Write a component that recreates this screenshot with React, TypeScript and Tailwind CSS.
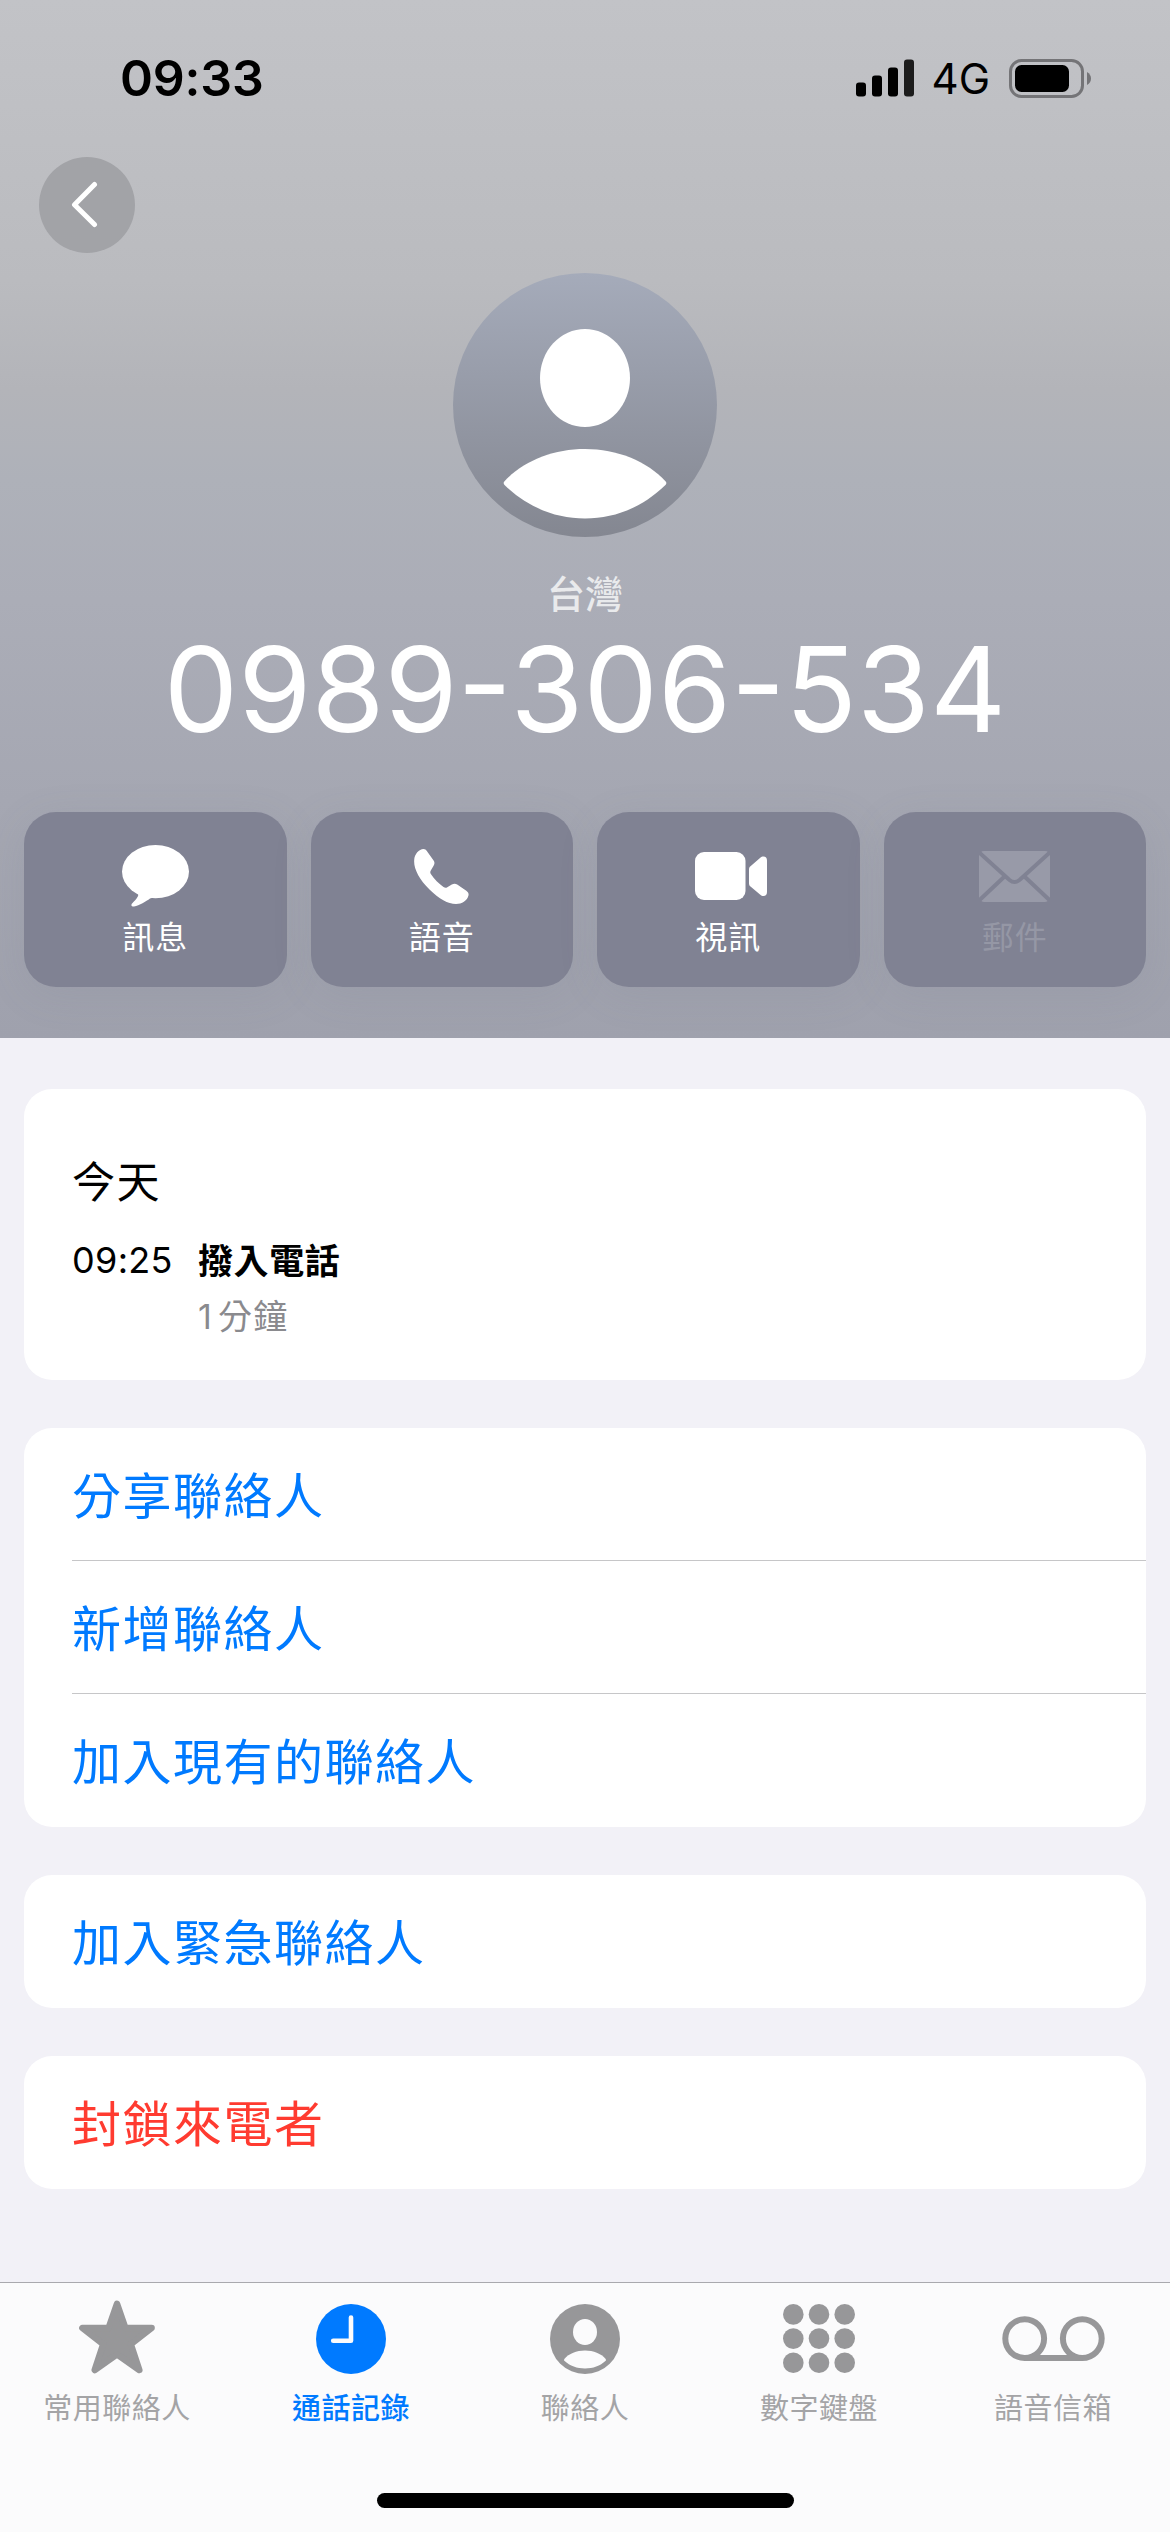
import type { ReactNode } from 'react';

const MessageIcon = () => (
  <svg width="67" height="62" viewBox="0 0 67 62" fill="#fff">
    <ellipse cx="33.5" cy="26.6" rx="33.5" ry="26.6" />
    <path d="M12 46 C16 48.5 17 49 15.8 51.5 C14.6 54 12.5 56 10.3 58.2 C8.6 60 9.5 61.7 12 61.4 C17.5 60.7 24 56.5 28 53.6 C29 53 30 53 33 53 L30 40 Z" />
  </svg>
);

const PhoneIcon = () => (
  <svg width="55" height="55" viewBox="0 0 55 55" fill="#fff">
    <path d="M0.2 11 C0.5 5 5 0 9.5 0 C11 0 12 0.7 13 2.3 L19.6 11.4 C20.8 13.2 20.7 14.8 19.6 16.8 L16.8 21.4 C16 22.8 16.1 23.8 17 25.3 C20 30 25 35 29.5 38 C31 39 32 39 33.3 38.2 L37.8 35.6 C39.8 34.4 41.6 34.5 43.2 35.6 L52.3 41.7 C54.5 43.3 55 45 54.3 47 C53 51.5 48 55 42 55 C34 55 25 50 15.5 40.5 C5 30 -0.5 19.5 0.2 11 Z" />
  </svg>
);

const VideoIcon = () => (
  <svg width="72" height="48" viewBox="0 0 72 48" fill="#fff" className="ml-[5px]">
    <rect width="50.5" height="48" rx="9" />
    <path d="M54 17.5 C54 15.8 54.5 15 55.5 14.2 L65 6 C66.3 5 67.2 4.6 68.5 4.6 C70.7 4.6 72 6 72 8.5 V40 C72 42.5 70.7 44 68.5 44 C67.2 44 66.3 43.5 65 42.4 L55.5 34.5 C54.5 33.6 54 32.8 54 31.2 Z" />
  </svg>
);

const MailIcon = () => (
  <svg width="71" height="51" viewBox="0 0 71 51">
    <rect width="71" height="51" rx="5" fill="#989aa8" />
    <g fill="none" stroke="#808293" strokeWidth="4">
      <path d="M-2 -0.5 L30.5 29 Q35.5 33 40.5 29 L73 -0.5" />
      <path d="M-2 51.5 L25 26 M73 51.5 L46 26" />
    </g>
  </svg>
);

const StarIcon = () => (
  <svg width="76" height="74" viewBox="0 0 76 74" className="mb-[4px]">
    <path
      d="M38 3.8 L46.4 28 H72.6 L51.8 44.3 L60.3 70 L38 54.3 L15.7 70 L24.2 44.3 L3.4 28 H29.6 Z"
      fill="#979799"
      stroke="#979799"
      strokeWidth="6.5"
      strokeLinejoin="round"
    />
  </svg>
);

const ClockIcon = () => (
  <svg width="70" height="70" viewBox="0 0 70 70">
    <circle cx="35" cy="35" r="35" fill="#007aff" />
    <path d="M35 13.5 V36.7 H17.2" fill="none" stroke="#fbfbfc" strokeWidth="4.6" strokeLinecap="round" strokeLinejoin="round" />
  </svg>
);

const PersonIcon = () => (
  <svg width="70" height="70" viewBox="0 0 70 70">
    <circle cx="35" cy="35" r="35" fill="#979799" />
    <ellipse cx="35" cy="28" rx="12" ry="13" fill="#fbfbfc" />
    <path d="M14.3 55 C19 49.5 26.5 46.5 35 46.5 S51 49.5 55.7 55 Q56.2 56 55.7 56.8 C50 62 43 64.5 35 64.5 S20 62 14.3 56.8 Q13.8 56 14.3 55 Z" fill="#fbfbfc" />
  </svg>
);

const KeypadIcon = () => (
  <svg width="72" height="70" viewBox="0 0 72 70" fill="#979799">
    {[10.4, 34.6, 58.8].map((y) =>
      [10.3, 36, 61.7].map((x) => <circle key={`${x}-${y}`} cx={x} cy={y} r="10.3" />)
    )}
  </svg>
);

const VoicemailIcon = () => (
  <svg width="103" height="46" viewBox="0 0 103 46" fill="none" stroke="#979799" strokeWidth="6">
    <circle cx="22.7" cy="22.6" r="19.4" />
    <circle cx="80.3" cy="22.6" r="19.4" />
    <path d="M22.7 42 H80.3" />
  </svg>
);

const actions = [
  { label: '訊息', icon: <MessageIcon /> },
  { label: '語音', icon: <PhoneIcon /> },
  { label: '視訊', icon: <VideoIcon /> },
  { label: '郵件', icon: <MailIcon />, disabled: true },
];

const tabs = [
  { label: '常用聯絡人', icon: <StarIcon /> },
  { label: '通話記錄', icon: <ClockIcon />, active: true },
  { label: '聯絡人', icon: <PersonIcon /> },
  { label: '數字鍵盤', icon: <KeypadIcon /> },
  { label: '語音信箱', icon: <VoicemailIcon /> },
];

function StatusBar() {
  return (
    <div className="h-[157px] flex items-start justify-between pl-[120px] pr-[78px] pt-[48px] text-black font-['Inter',sans-serif]">
      <span className="text-[50px] leading-[60px] tracking-[-0.2px] font-semibold">09:33</span>
      <div className="h-[60px] flex items-center">
        <svg width="58" height="38" viewBox="0 0 58 38" className="mr-[18px]">
          <rect x="0" y="23.5" width="10" height="14" rx="3" />
          <rect x="16" y="16.5" width="10" height="21" rx="3" />
          <rect x="32" y="8.5" width="10" height="29" rx="3" />
          <rect x="48" y="0.5" width="10" height="37" rx="3" fill="#1c1c1c" />
        </svg>
        <span className="text-[42px] leading-[60px] pt-[2px]">4G</span>
        <svg width="83" height="39" viewBox="0 0 83 39" className="ml-[19px]">
          <rect x="1.5" y="1.5" width="72" height="36" rx="11" fill="none" stroke="#747477" strokeWidth="3" />
          <rect x="6" y="6" width="54" height="27" rx="6.5" />
          <path d="M78 13 Q82 15.5 82 19.5 T78 26 Z" fill="#747477" />
        </svg>
      </div>
    </div>
  );
}

function Card({ children }: { children: ReactNode }) {
  return <section className="bg-white rounded-[28px] overflow-hidden">{children}</section>;
}

function Row({ children, danger, divider }: { children: ReactNode; danger?: boolean; divider?: boolean }) {
  return (
    <div className="pl-12">
      <div
        className={`h-[133px] pb-[3px] flex items-center text-[49px] tracking-[1.5px] ${
          danger ? 'text-[#ff3b30]' : 'text-[#007aff]'
        } ${divider ? 'border-b border-[#c6c6c8]' : ''}`}
      >
        {children}
      </div>
    </div>
  );
}

export default function App() {
  return (
    <div className="w-[1170px] h-[2532px] flex flex-col bg-[#f2f1f7] overflow-hidden font-['Noto_Sans_CJK_TC',sans-serif]">
      <header className="h-[1038px] shrink-0 bg-[linear-gradient(180deg,#c2c3c7_0px,#babbbf_280px,#b3b4b9_390px,#aeb1b9_480px,#abadb7_600px,#a5a7b2_800px,#9fa1ad_1038px)]">
        <StatusBar />
        <button className="ml-[39px] size-24 rounded-full bg-[#a2a3a7] flex items-center pl-[32px]">
          <svg width="27" height="48" viewBox="0 0 27 48">
            <path d="M23.5 3.5 L3.5 23.7 L23.5 43.5" fill="none" stroke="#fff" strokeWidth="5" strokeLinecap="round" strokeLinejoin="round" />
          </svg>
        </button>

        <div className="mt-5 flex flex-col items-center">
          <svg width="264" height="264" viewBox="0 0 264 264">
            <defs>
              <linearGradient id="avatar" x1="0" y1="0" x2="0" y2="1">
                <stop offset="0" stopColor="#a5abba" />
                <stop offset="1" stopColor="#848791" />
              </linearGradient>
            </defs>
            <circle cx="132" cy="132" r="132" fill="url(#avatar)" />
            <ellipse cx="132" cy="105" rx="45" ry="49" fill="#fff" />
            <path d="M51.3 208.5 C70 188 100 176 132 176 S194 188 212.7 208.5 Q214 210 212.7 211.8 C190 234 162 245.5 132 245.5 S74 234 51.3 211.8 Q50 210 51.3 208.5 Z" fill="#fff" />
          </svg>
          <p className="mt-[27px] h-[58px] text-[38px] leading-[56px] font-medium text-[#e9eaec]">台灣</p>
          <h1 className="h-[134px] text-[118px] leading-[134px] text-white font-['Inter',sans-serif]">0989-306-534</h1>
        </div>

        <div className="mt-[56px] px-6 grid grid-cols-4 gap-6">
          {actions.map((action) => (
            <button
              key={action.label}
              className="h-[175px] rounded-[32px] bg-[#808293] flex flex-col items-center shadow-[0_8px_40px_rgba(110,112,130,0.12)]"
            >
              <span className="mt-[30px] h-[68px] flex items-center">{action.icon}</span>
              <span className={`mt-[2px] text-[32px] leading-[46px] tracking-[1px] ${action.disabled ? 'text-[#9597a5]' : 'text-white'}`}>
                {action.label}
              </span>
            </button>
          ))}
        </div>
      </header>

      <main className="flex-1 min-h-0 px-6 pt-[51px] flex flex-col gap-12">
        <Card>
          <div className="h-[291px] pl-12 pt-[58px]">
            <h2 className="text-[43px] leading-[64px] tracking-[1.5px] text-black">今天</h2>
            <div className="mt-[21px] flex">
              <span className="w-[126px] pt-px text-[36px] leading-[54px] tracking-[0.3px] text-black font-['Inter',sans-serif]">09:25</span>
              <div>
                <p className="text-[35px] leading-[54px] tracking-[0.6px] font-bold text-black">撥入電話</p>
                <p className="mt-[3px] text-[34px] leading-[56px] tracking-[1.2px] text-[#8a8a8e] font-['Inter','Noto_Sans_CJK_TC',sans-serif]">
                  <span className="mr-[5px]">1</span>分鐘
                </p>
              </div>
            </div>
          </div>
        </Card>

        <Card>
          <Row divider>分享聯絡人</Row>
          <Row divider>新增聯絡人</Row>
          <Row>加入現有的聯絡人</Row>
        </Card>

        <Card>
          <Row>加入緊急聯絡人</Row>
        </Card>

        <Card>
          <Row danger>封鎖來電者</Row>
        </Card>
      </main>

      <footer className="h-[250px] shrink-0 border-t border-[#a9a9ae] bg-[#fbfbfc] flex flex-col items-center">
        <nav className="w-full grid grid-cols-5">
          {tabs.map((tab) => (
            <button key={tab.label} className="flex flex-col items-center">
              <span className="mt-[18px] h-[76px] flex items-center">{tab.icon}</span>
              <span
                className={`mt-[8px] text-[29px] leading-[42px] tracking-[0.5px] ${
                  tab.active ? 'text-[#007aff] font-medium' : 'text-[#a4a4a6]'
                }`}
              >
                {tab.label}
              </span>
            </button>
          ))}
        </nav>
        <div className="mt-auto mb-6 w-[417px] h-[15px] rounded-full bg-black" />
      </footer>
    </div>
  );
}
